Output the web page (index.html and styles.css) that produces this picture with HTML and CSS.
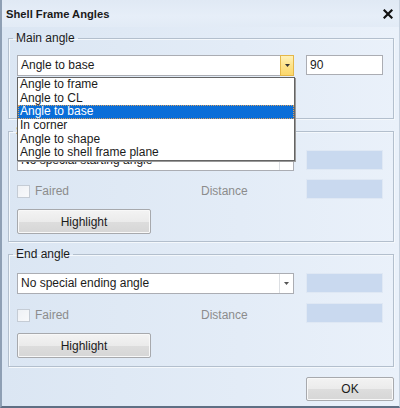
FILE: index.html
```html
<!DOCTYPE html>
<html>
<head>
<meta charset="utf-8">
<link rel="stylesheet" href="styles.css">
</head>
<body>
<div class="window">
  <div class="titlebar">
    <span class="title">Shell Frame Angles</span>
    <span class="close"><svg width="10" height="10" viewBox="0 0 10 10"><path d="M1.5 1.5 L8.5 8.5 M8.5 1.5 L1.5 8.5" stroke="#111" stroke-width="2.2" stroke-linecap="square"/></svg></span>
  </div>
  <div class="content">
    <fieldset class="group g1">
      <legend>Main angle</legend>
      <div class="row">
        <div class="combo">
          <span class="combo-text">Angle to base</span>
          <span class="arrow hot"><svg width="5" height="3" viewBox="0 0 5 3"><path d="M0 0 H5 L2.5 3 Z" fill="#333"/></svg></span>
          <ul class="listbox">
            <li>Angle to frame</li>
            <li>Angle to CL</li>
            <li class="sel">Angle to base</li>
            <li>In corner</li>
            <li>Angle to shape</li>
            <li>Angle to shell frame plane</li>
          </ul>
        </div>
        <div class="input">90</div>
      </div>
    </fieldset>

    <fieldset class="group g2">
      <legend>Start angle</legend>
      <div class="row">
        <div class="combo">
          <span class="combo-text">No special starting angle</span>
          <span class="arrow"><svg width="5" height="3" viewBox="0 0 5 3"><path d="M0 0 H5 L2.5 3 Z" fill="#555"/></svg></span>
        </div>
        <div class="input disabled"></div>
      </div>
      <div class="row row2">
        <span class="check"></span>
        <span class="lbl faired">Faired</span>
        <span class="lbl dist">Distance</span>
        <div class="input disabled"></div>
      </div>
      <button class="btn hl">Highlight</button>
    </fieldset>

    <fieldset class="group g3">
      <legend>End angle</legend>
      <div class="row">
        <div class="combo">
          <span class="combo-text">No special ending angle</span>
          <span class="arrow"><svg width="5" height="3" viewBox="0 0 5 3"><path d="M0 0 H5 L2.5 3 Z" fill="#555"/></svg></span>
        </div>
        <div class="input disabled"></div>
      </div>
      <div class="row row2">
        <span class="check"></span>
        <span class="lbl faired">Faired</span>
        <span class="lbl dist">Distance</span>
        <div class="input disabled"></div>
      </div>
      <button class="btn hl">Highlight</button>
    </fieldset>

    <div class="footer">
      <button class="btn ok">OK</button>
    </div>
  </div>
</div>
</body>
</html>
```

FILE: styles.css
```css
* { box-sizing: border-box; }
html, body { margin: 0; padding: 0; }
body {
  width: 400px;
  height: 408px;
  overflow: hidden;
  font-family: "Liberation Sans", Arial, sans-serif;
  font-size: 12px;
  color: #1b1b1b;
}
.window {
  width: 400px;
  height: 408px;
  background: linear-gradient(to right, #dbe6f3 0%, #e3ecf7 60%, #eaf1fa 100%);
  border-left: 2px solid #8e9fb4;
  border-bottom: 2px solid #5f6f84;
  border-right: 1px solid #c7d2df;
  position: relative;
}
.titlebar {
  height: 27px;
  display: flex;
  align-items: center;
  justify-content: space-between;
  padding: 0 6px 0 4px;
  background: linear-gradient(to bottom, #e0e9f4 0%, #e6eef8 60%, #e2ebf6 100%);
}
.title {
  font-weight: bold;
  font-size: 11.2px;
  color: #1a1a1a;
  padding-top: 1px;
}
.close {
  display: flex;
  width: 10px;
  height: 10px;
  margin-top: 1px;
}
.content {
  padding: 4px 5px 0 6px;
}
.group {
  margin: 0;
  padding: 10px 10px 0 8px;
  border: 1px solid #b3bfcd;
  box-shadow: inset 1px 1px 0 #f4f8fc, 1px 1px 0 #f4f8fc;
  min-width: 0;
}
.group legend {
  padding: 0 3px;
  margin-left: -4px;
  line-height: 14px;
  font-size: 12px;
  color: #1b1b1b;
}
.g1 { height: 88px; }
.g2 { height: 118px; margin-top: 5px; padding-top: 12px; }
.g3 { height: 120px; margin-top: 5px; padding-top: 12px; }

.row {
  display: flex;
  align-items: flex-start;
}
.combo {
  position: relative;
  width: 277px;
  height: 21px;
  background: #fff;
  border: 1px solid #abadb3;
  display: flex;
  align-items: center;
}
.combo-text {
  flex: 1;
  padding-left: 3px;
  line-height: 19px;
  white-space: nowrap;
}
.arrow {
  width: 14px;
  height: 19px;
  display: flex;
  align-items: center;
  justify-content: center;
  border-left: 1px solid #dcdfe3;
}
.arrow.hot {
  height: 21px;
  margin: -1px -1px -1px 0;
  width: 14px;
  border: 1px solid #e4b74a;
  background: linear-gradient(to bottom, #fff1b8 0%, #fde38a 50%, #fbd76b 100%);
}
.input {
  width: 77px;
  height: 20px;
  margin-left: 12px;
  background: #fff;
  border: 1px solid #abadb3;
  padding-left: 3px;
  line-height: 18px;
}
.input.disabled {
  background: #c9d9ef;
  border: 1px solid #dfe8f4;
}
.row2 {
  margin-top: 9px;
  height: 20px;
  align-items: center;
}
.check {
  width: 13px;
  height: 13px;
  border: 1px solid #c5ccd5;
  background: linear-gradient(to bottom right, #eef1f5, #f8f9fb);
  margin-top: 4px;
}
.lbl {
  color: #8c8c8c;
  line-height: 14px;
}
.faired {
  margin-left: 5px;
  width: 166px;
  margin-top: 3px;
}
.dist {
  width: 93px;
  margin-top: 4px;
}
.row2 .input { margin-left: 12px; }
.g2 .row2 { margin-top: 8px; }

.btn {
  font-family: "Liberation Sans", Arial, sans-serif;
  font-size: 12px;
  color: #1b1b1b;
  border: 1px solid #a7a9ad;
  border-radius: 2px;
  background: linear-gradient(to bottom, #f3f3f3 0%, #ebebeb 50%, #dddddd 51%, #d6d6d6 100%);
  box-shadow: inset 0 0 0 1px #f8f8f8;
  padding: 0;
  display: block;
}
.hl {
  width: 134px;
  height: 25px;
  margin-top: 10px;
}
.footer {
  display: flex;
  justify-content: flex-end;
  margin-top: 10px;
}
.ok {
  width: 88px;
  height: 24px;
}

.listbox {
  position: absolute;
  left: -1px;
  top: 21px;
  width: 278px;
  margin: 0;
  padding: 0;
  list-style: none;
  background: #fff;
  border: 1px solid #646464;
  box-shadow: 1px 1px 0 #9a9a9a;
  z-index: 10;
}
.listbox li {
  height: 13.67px;
  line-height: 13.67px;
  padding-left: 2px;
  white-space: nowrap;
}
.listbox li.sel {
  background: #0a6ed8;
  color: #fff;
  outline: 1px dotted #d8a060;
  outline-offset: -1px;
}
```
